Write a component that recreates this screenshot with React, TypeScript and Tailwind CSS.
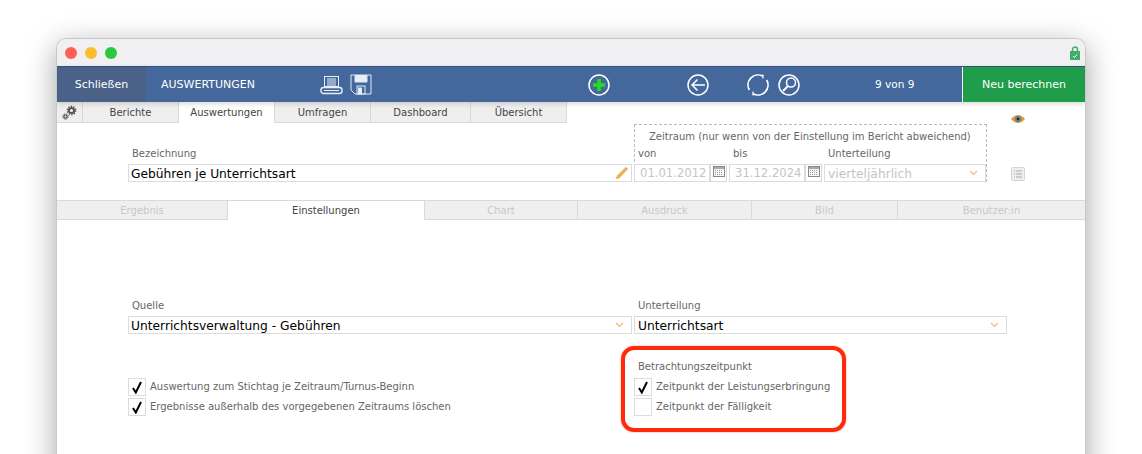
import type { ReactNode } from 'react'

const font = "font-['DejaVu_Sans',sans-serif]"

const mainTabs = [
  { label: 'Berichte', width: 'w-[96px]' },
  { label: 'Auswertungen', width: 'w-[96px]', active: true },
  { label: 'Umfragen', width: 'w-[96px]' },
  { label: 'Dashboard', width: 'w-[100px]' },
  { label: 'Übersicht', width: 'w-[96px]' },
]

const subTabs = [
  { label: 'Ergebnis', width: 'w-[171px]' },
  { label: 'Einstellungen', width: 'w-[197px]', active: true },
  { label: 'Chart', width: 'w-[153px]' },
  { label: 'Ausdruck', width: 'w-[174px]' },
  { label: 'Bild', width: 'w-[146px]' },
  { label: 'Benutzer:in', width: 'flex-1' },
]

function Chevron() {
  return (
    <svg className="-mt-[2px]" width="9" height="6" viewBox="0 0 9 6" fill="none" stroke="#f5bb6a" strokeWidth="1.2">
      <path d="M1 1l3.5 3.5L8 1" />
    </svg>
  )
}

function Calendar() {
  return (
    <div className="flex h-[18px] w-[17px] items-start justify-center border border-[#d9d9d9] bg-white pt-[1px]">
      <svg width="12" height="11" viewBox="0 0 12 11">
        <rect x="0.5" y="0.5" width="11" height="10" fill="#f8f8f8" stroke="#888" />
        <rect x="1" y="1" width="10" height="2" fill="#aaa" />
        <path d="M2 4.5h8M2 6.5h8M2 8.5h8" stroke="#999" strokeDasharray="1 1" />
      </svg>
    </div>
  )
}

function Field({ className, children }: { className: string; children: ReactNode }) {
  return (
    <div className={`flex h-[18px] items-center border border-[#dcdcdc] bg-white pt-[2px] ${className}`}>{children}</div>
  )
}

function Label({ children }: { children: ReactNode }) {
  return <div className="mb-[4px] ml-[4px] mt-[1px] text-[10px] leading-[12px] text-[#666]">{children}</div>
}

function Check({ checked, label }: { checked?: boolean; label: string }) {
  return (
    <div className="flex h-[20px] items-center">
      <div className="flex h-[18px] w-[18px] items-center justify-center border border-[#dcdcdc] bg-white">
        {checked && (
          <svg width="12" height="13" viewBox="0 0 12 13" fill="none" stroke="#000" strokeWidth="2">
            <path d="M2 7l2.8 4.5L10 1" />
          </svg>
        )}
      </div>
      <span className="mb-[2px] ml-[4px] text-[10px] text-[#666]">{label}</span>
    </div>
  )
}

export default function App() {
  return (
    <div className={`h-[454px] w-[1142px] overflow-hidden bg-white pl-[56px] pt-[38px] ${font}`}>
      <div className="h-[500px] w-[1030px] overflow-hidden rounded-t-[10px] border-x border-t border-[#c8c8c8] bg-white shadow-[0_8px_30px_rgba(0,0,0,0.36)]">
        {/* title bar */}
        <div className="flex h-[27px] items-center gap-[8px] bg-[#f0f0f2] pl-[8px] pr-[5px]">
          <div className="h-[12px] w-[12px] rounded-full bg-[#ff5f57]" />
          <div className="h-[12px] w-[12px] rounded-full bg-[#ffbd2e]" />
          <div className="h-[12px] w-[12px] rounded-full bg-[#28c940]" />
          <svg className="ml-auto" width="10" height="14" viewBox="0 0 10 14">
            <path d="M2.5 6V3.5a2.5 2.5 0 015 0V6" fill="none" stroke="#3fae6b" strokeWidth="1.5" />
            <rect x="0" y="5" width="10" height="9" fill="#3fae6b" />
            <path d="M3 10l1.5 1.5L7 8.5" fill="none" stroke="#fff" />
          </svg>
        </div>

        {/* blue toolbar */}
        <div className="relative z-10 flex h-[36px] items-center border-t border-[#2f4f86] bg-[#44689c] text-[10.5px] text-white shadow-[0_2px_5px_rgba(0,0,0,0.15)]">
          <div className="flex h-full w-[89px] items-center justify-center bg-[#4a6288] pt-[2px] text-[11px]">Schließen</div>
          <div className="ml-[15px] w-[159px] pt-[2px] text-[11px]">AUSWERTUNGEN</div>
          <svg width="23" height="20" viewBox="0 0 23 20" fill="none" stroke="#e8eef6" strokeWidth="1">
            <rect x="4.5" y="1.5" width="14" height="10" />
            <path d="M7 4h9M7 6h9M7 8h9M7 10h9" />
            <rect x="1" y="12.5" width="21" height="6" rx="2.5" strokeWidth="1.4" />
            <path d="M4 15.5h15" />
          </svg>
          <svg className="ml-[7px]" width="22" height="21" viewBox="0 0 22 21" fill="none" stroke="#dfe7f2" strokeWidth="1">
            <path d="M1 1h20v19H5l-4-4z" />
            <path d="M5 1v7h12V1" fill="#e8eef6" />
            <rect x="7" y="12" width="8" height="8" />
            <rect x="8.5" y="14" width="3" height="6" fill="#e8eef6" />
          </svg>
          <svg className="ml-[216px]" width="22" height="22" viewBox="0 0 22 22" fill="none">
            <circle cx="11" cy="11" r="10" stroke="#fff" strokeWidth="1.5" />
            <path d="M11 5v12M5 11h12" stroke="#22e01f" strokeWidth="3.6" />
          </svg>
          <svg className="ml-[77px]" width="22" height="22" viewBox="0 0 22 22" fill="none" stroke="#fff" strokeWidth="1.5">
            <circle cx="11" cy="11" r="10" />
            <path d="M18 11H5M10.5 5.5L5 11l5.5 5.5" />
          </svg>
          <svg className="ml-[38px]" width="22" height="22" viewBox="0 0 22 22" fill="none" stroke="#fff" strokeWidth="1.7">
            <path d="M19.66 6A10 10 0 016 19.66M2.34 16A10 10 0 0116 2.34" />
            <path d="M6 17.5v3.5h-.5M16 4.5V1h.5" strokeWidth="1.2" />
          </svg>
          <svg className="ml-[9px]" width="22" height="22" viewBox="0 0 22 22" fill="none" stroke="#fff" strokeWidth="1.5">
            <circle cx="11" cy="11" r="10" />
            <circle cx="13" cy="8.5" r="4.5" />
            <path d="M10 12l-5 5" strokeWidth="2" />
          </svg>
          <div className="ml-[75px] w-[40px] whitespace-nowrap">9 von 9</div>
          <div className="ml-auto flex h-full w-[123px] items-center justify-center border-l border-white bg-[#1f9d4a] pt-[2px] text-[11px]">
            Neu berechnen
          </div>
        </div>

        {/* main tabs */}
        <div className="flex h-[21px] text-[10px] text-[#444]">
          <div className="flex w-[26px] items-center justify-center border-b border-r border-[#d9d9d9] bg-[#efefef]">
            <svg width="15" height="15" viewBox="0 0 15 15" fill="none" stroke="#555">
              <circle cx="9.5" cy="5.5" r="2.6" strokeWidth="2" />
              <circle cx="9.5" cy="5.5" r="4.2" strokeWidth="1.4" strokeDasharray="1.4 1.24" />
              <circle cx="3.5" cy="11.5" r="1.6" strokeWidth="1.4" />
              <circle cx="3.5" cy="11.5" r="2.8" strokeWidth="1" strokeDasharray="1.1 1.1" />
            </svg>
          </div>
          {mainTabs.map((tab) => (
            <div
              key={tab.label}
              className={`flex items-center justify-center border-r border-[#d9d9d9] ${tab.width} ${
                tab.active ? 'bg-white' : 'border-b bg-[#efefef]'
              }`}
            >
              {tab.label}
            </div>
          ))}
        </div>

        {/* name + period */}
        <div className="ml-[71px] mt-[1px] flex h-[58px] items-end">
          <div className="w-[506px]">
            <Label>Bezeichnung</Label>
            <Field className="w-[504px] justify-between px-[2px] text-[12.25px] text-black">
              Gebühren je Unterrichtsart
              <svg className="-mt-[2px]" width="14" height="14" viewBox="0 0 14 14">
                <path d="M1 13l.6-3L10.2 1.6 12.4 3.8 4 12.4z" fill="#f0b050" />
                <path d="M10.9.9l2.2 2.2-.7.7-2.2-2.2z" fill="#c88ab0" />
              </svg>
            </Field>
          </div>
          <div className="h-[58px] w-[353px] border-x border-t border-dashed border-[#bbb]">
            <div className="h-[19px] pl-[14px] pt-[6px] text-[10px] leading-[12px] text-[#666]">
              Zeitraum (nur wenn von der Einstellung im Bericht abweichend)
            </div>
            <div className="flex h-[20px] items-center pb-[2px] text-[10px] text-[#666]">
              <span className="ml-[3px] w-[95px]">von</span>
              <span className="w-[95px]">bis</span>
              <span>Unterteilung</span>
            </div>
            <div className="flex text-[#c4c4c4]">
              <Field className="-ml-px w-[76px] pl-[5px] text-[11.6px]">01.01.2012</Field>
              <Calendar />
              <Field className="ml-[2px] w-[76px] pl-[5px] text-[11.6px]">31.12.2024</Field>
              <Calendar />
              <Field className="ml-[2px] flex-1 justify-between pl-[3px] pr-[7px] text-[12.25px]">
                vierteljährlich
                <Chevron />
              </Field>
            </div>
          </div>
          <div className="ml-[24px] flex h-[68px] flex-col items-center justify-between pb-[1px]">
            <svg width="14" height="10" viewBox="0 0 14 10">
              <path d="M0 5q7-8 14 0q-7 8-14 0z" fill="#d99a3a" />
              <circle cx="7" cy="5" r="3" fill="#5a7f9c" />
              <circle cx="7" cy="5" r="1.2" fill="#223" />
            </svg>
            <svg width="14" height="14" viewBox="0 0 14 14" fill="none">
              <rect x="0.5" y="0.5" width="13" height="13" rx="1" fill="#eee" stroke="#d4d4d4" />
              <path d="M3 4h1M3 7h1M3 10h1" stroke="#8ab4dc" />
              <path d="M5 4h6M5 7h6M5 10h6" stroke="#aaa" />
            </svg>
          </div>
        </div>

        {/* sub tabs */}
        <div className="mt-[18px] flex h-[20px] border-b border-t border-[#d9d9d9] text-[10px] text-[#c8c8c8]">
          {subTabs.map((tab) => (
            <div
              key={tab.label}
              className={`flex items-center justify-center border-r border-[#d9d9d9] last:border-r-0 ${tab.width} ${
                tab.active ? '-mb-px bg-white text-[#444]' : 'bg-[#efefef]'
              }`}
            >
              {tab.label}
            </div>
          ))}
        </div>

        {/* source row */}
        <div className="ml-[71px] mt-[79px] flex">
          <div className="w-[506px]">
            <Label>Quelle</Label>
            <Field className="w-[504px] justify-between pl-[2px] pr-[7px] text-[12.25px] text-black">
              Unterrichtsverwaltung - Gebühren
              <Chevron />
            </Field>
          </div>
          <div>
            <Label>Unterteilung</Label>
            <Field className="w-[373px] justify-between pl-[3px] pr-[7px] text-[12.25px] text-black">
              Unterrichtsart
              <Chevron />
            </Field>
          </div>
        </div>

        {/* options */}
        <div className="ml-[71px] mt-[12px] flex items-start">
          <div className="mt-[31px] w-[493px]">
            <Check checked label="Auswertung zum Stichtag je Zeitraum/Turnus-Beginn" />
            <Check checked label="Ergebnisse außerhalb des vorgegebenen Zeitraums löschen" />
          </div>
          <div className="h-[86px] w-[225px] rounded-[13px] border-4 border-[#ff2a0a] pl-[9px] pt-[10px] shadow-[0_0_2px_rgba(255,42,10,0.5)]">
            <Label>Betrachtungszeitpunkt</Label>
            <Check checked label="Zeitpunkt der Leistungserbringung" />
            <Check label="Zeitpunkt der Fälligkeit" />
          </div>
        </div>
      </div>
    </div>
  )
}
